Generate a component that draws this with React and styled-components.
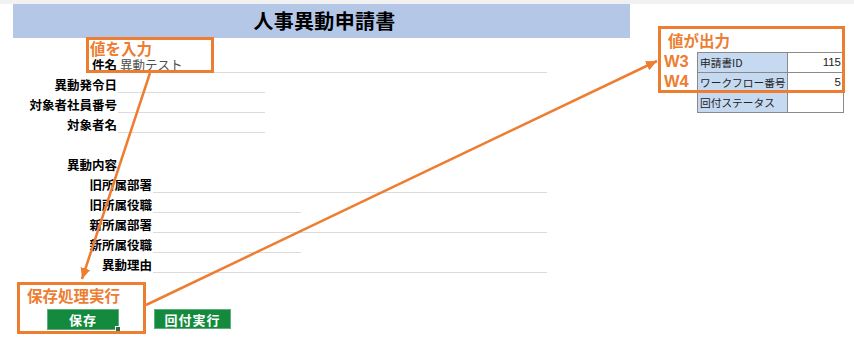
import React from "react";
import styled, { createGlobalStyle } from "styled-components";

const Global = createGlobalStyle`
  html, body { margin: 0; padding: 0; background: #ffffff; }
  body { font-family: "Noto Sans CJK JP", "Noto Sans", sans-serif; color: #000; }
`;

const ORANGE = "#ed7d31";

const Page = styled.div`
  position: relative;
  width: 854px;
  height: 342px;
  overflow: hidden;
  background: #fff;
`;

const TopStrip = styled.div`
  height: 4px;
  background: #f1f1f1;
`;

const Main = styled.div`
  display: flex;
  align-items: flex-start;
`;

const Sheet = styled.div`
  width: 617px;
  padding-left: 13px;
  display: flex;
  flex-direction: column;
`;

const Banner = styled.div`
  height: 34px;
  background: #b4c7e7;
  display: flex;
  align-items: center;
  justify-content: center;
  margin-bottom: 15px;
`;

const Title = styled.h1`
  margin: 0;
  font-size: 20px;
  font-weight: 700;
  line-height: 24px;
  letter-spacing: 0.3px;
  padding-left: 6px;
`;

const Row = styled.div`
  display: flex;
  align-items: flex-end;
  height: 20px;
`;

const Label = styled.div`
  width: ${(p) => p.$w}px;
  flex: none;
  text-align: right;
  font-size: 12.5px;
  font-weight: 700;
  line-height: 16px;
  padding-bottom: 0;
  padding-right: 1px;
  box-sizing: border-box;
  white-space: nowrap;
`;

const Value = styled.div`
  width: ${(p) => p.$w}px;
  height: 20px;
  flex: none;
  box-sizing: border-box;
  border-bottom: ${(p) => (p.$w ? "1px solid #dcdcdc" : "none")};
  font-size: 12.5px;
  line-height: 16px;
  color: #505050;
  padding: 4px 0 0 2px;
  white-space: nowrap;
`;

const Buttons = styled.div`
  display: flex;
  gap: 35px;
  margin-top: 36px;
  padding-left: 34px;
  align-items: flex-start;
`;

const GreenButton = styled.div`
  position: relative;
  width: ${(p) => p.$w}px;
  height: ${(p) => p.$h}px;
  box-sizing: border-box;
  background: #138a3d;
  border: 1px solid #5fae7b;
  color: #fff;
  font-size: 13px;
  font-weight: 700;
  display: flex;
  align-items: center;
  justify-content: center;
  letter-spacing: 1px;
`;

const Handle = styled.span`
  position: absolute;
  right: -3px;
  bottom: -3px;
  width: 4px;
  height: 4px;
  background: #217346;
  border: 1px solid #fff;
`;

const Side = styled.div`
  margin-left: 67px;
  padding-top: 48px;
`;

const Table = styled.div`
  display: grid;
  grid-template-columns: 90px 56px;
  border-top: 1px solid #8a8a8a;
  border-left: 1px solid #8a8a8a;
`;

const Cell = styled.div`
  height: 20px;
  box-sizing: border-box;
  border-right: 1px solid #8a8a8a;
  border-bottom: 1px solid #8a8a8a;
  background: ${(p) => (p.$head ? "#c5d9f1" : "#fff")};
  font-size: ${(p) => (p.$head ? 10.7 : 11.5)}px;
  line-height: 19px;
  padding: 0 ${(p) => (p.$head ? 0 : 2)}px 0 ${(p) => (p.$head ? 2 : 0)}px;
  text-align: ${(p) => (p.$head ? "left" : "right")};
  color: #222;
  white-space: nowrap;
  overflow: hidden;
  font-family: ${(p) => (p.$head ? '"Noto Sans CJK JP", sans-serif' : '"Liberation Sans", Arial, sans-serif')};
`;

const Callout = styled.div`
  position: absolute;
  left: ${(p) => p.$x}px;
  top: ${(p) => p.$y}px;
  width: ${(p) => p.$w}px;
  height: ${(p) => p.$h}px;
  box-sizing: border-box;
  border: 3px solid ${ORANGE};
  display: flex;
  flex-direction: column;
`;

const CalloutText = styled.div`
  color: ${ORANGE};
  font-size: 15.5px;
  font-weight: 700;
  line-height: ${(p) => p.$lh}px;
  padding-left: ${(p) => p.$pl}px;
  white-space: nowrap;
`;

const CellTag = styled.div`
  color: ${ORANGE};
  font-family: "Liberation Sans", Arial, sans-serif;
  font-size: 16.5px;
  font-weight: 700;
  line-height: 20px;
  padding-left: 3px;
`;

const Arrows = styled.svg`
  position: absolute;
  left: 0;
  top: 0;
  pointer-events: none;
`;

const topFields = [
  { label: "件名", value: "異動テスト", w: 429 },
  { label: "異動発令日", w: 147 },
  { label: "対象者社員番号", w: 147 },
  { label: "対象者名", w: 147 },
  { label: "", w: 0 },
  { label: "異動内容", w: 0 },
];

const subFields = [
  { label: "旧所属部署", w: 394 },
  { label: "旧所属役職", w: 148 },
  { label: "新所属部署", w: 394 },
  { label: "新所属役職", w: 148 },
  { label: "異動理由", w: 394 },
];

const outputs = [
  { label: "申請書ID", value: "115" },
  { label: "ワークフロー番号", value: "5" },
  { label: "回付ステータス", value: "" },
];

export default function App() {
  return (
    <Page>
      <Global />
      <TopStrip />
      <Main>
        <Sheet>
          <Banner>
            <Title>人事異動申請書</Title>
          </Banner>
          {topFields.map((f, i) => (
            <Row key={"t" + i}>
              <Label $w={105}>{f.label}</Label>
              <Value $w={f.w}>{f.value}</Value>
            </Row>
          ))}
          {subFields.map((f, i) => (
            <Row key={"s" + i}>
              <Label $w={140}>{f.label}</Label>
              <Value $w={f.w} />
            </Row>
          ))}
          <Buttons>
            <GreenButton $w={72} $h={21}>
              保存
              <Handle />
            </GreenButton>
            <GreenButton $w={77} $h={20}>回付実行</GreenButton>
          </Buttons>
        </Sheet>
        <Side>
          <Table>
            {outputs.map((o) => (
              <React.Fragment key={o.label}>
                <Cell $head>{o.label}</Cell>
                <Cell>{o.value}</Cell>
              </React.Fragment>
            ))}
          </Table>
        </Side>
      </Main>

      <Callout $x={86} $y={37} $w={128} $h={36}>
        <CalloutText $lh={16} $pl={1}>値を入力</CalloutText>
      </Callout>
      <Callout $x={17} $y={282} $w={129} $h={52}>
        <CalloutText $lh={20} $pl={7}>保存処理実行</CalloutText>
      </Callout>
      <Callout $x={658} $y={26} $w={187} $h={67}>
        <CalloutText $lh={22} $pl={7}>値が出力</CalloutText>
        <CellTag>W3</CellTag>
        <CellTag>W4</CellTag>
      </Callout>

      <Arrows width="854" height="342" viewBox="0 0 854 342">
        <defs>
          <marker id="head" markerUnits="userSpaceOnUse" markerWidth="12" markerHeight="12" refX="11" refY="6" orient="auto">
            <path d="M0,1 L11,6 L0,11 Z" fill={ORANGE} />
          </marker>
        </defs>
        <line x1="150" y1="73" x2="82" y2="279" stroke={ORANGE} strokeWidth="2.5" markerEnd="url(#head)" />
        <line x1="146" y1="305" x2="657" y2="61" stroke={ORANGE} strokeWidth="2.5" markerEnd="url(#head)" />
      </Arrows>
    </Page>
  );
}
